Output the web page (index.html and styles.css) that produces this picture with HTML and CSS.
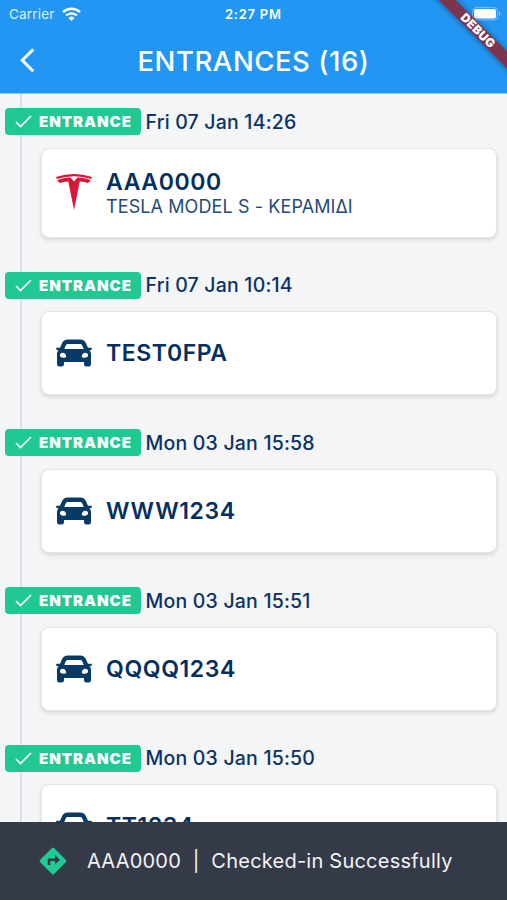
FILE: index.html
```html
<!DOCTYPE html>
<html lang="en">
<head>
<meta charset="utf-8">
<title>Entrances</title>
<link rel="stylesheet" href="styles.css">
</head>
<body>
<svg class="sprite" aria-hidden="true">
  <symbol id="check" viewBox="0 0 17 13"><path d="M1 7l4.500 4.500L16 1" fill="none" stroke="currentColor" stroke-width="1.700"/></symbol>
  <symbol id="car" viewBox="0 0 36 28"><path fill="currentColor" fill-rule="evenodd" d="M12 .5h12c3 0 5 1.300 6.100 4L32 8.700h3.200q.8 0 .7.800l-.3 1q-.2.800-1 .8h-1.400c1.200 1 1.800 2.400 1.800 4V25q0 2.500-2.300 2.500h-2.400q-2.300 0-2.300-2.500v-2H8v2q0 2.500-2.300 2.500H3.300Q1 27.500 1 25v-9.700c0-1.600.6-3 1.800-4H1.400q-.8 0-1-.8l-.3-1q-.1-.8.700-.8H4l1.900-4.200C7 1.800 9 .5 12 .5zM12.300 5c-1.500 0-2.100.4-2.700 1.700L8.300 10h19.400l-1.300-3.300C25.800 5.400 25.200 5 23.700 5zM6.900 13.700c-1.900 0-3 1-3 2.400 0 1.700 1.500 2.700 3.400 2.700 1.800 0 2.900-.4 2.900-1.500 0-1.400-1.500-3.600-3.300-3.600zm22.200 0c-1.800 0-3.300 2.200-3.300 3.600 0 1.100 1.100 1.500 2.900 1.500 1.900 0 3.400-1 3.400-2.700 0-1.400-1.100-2.400-3-2.400z"/></symbol>
</svg>
<div class="screen">
  <header class="appbar">
    <div class="status">
      <span class="carrier">Carrier</span>
      <svg class="wifi" viewBox="0 0 19 14"><g fill="none" stroke="#fff" stroke-width="2.400"><path d="M1 5.100a12.300 12.300 0 0 1 17 0"/><path d="M4.100 8.500a7.800 7.800 0 0 1 10.800 0"/></g><path fill="#fff" d="M6.500 10.900a4.400 4.400 0 0 1 6 0l-3 3z"/></svg>
      <span class="clock">2:27 PM</span>
      <svg class="battery" viewBox="0 0 29 14"><rect x=".6" y=".6" width="25" height="12.300" rx="3.500" fill="none" stroke="#fff" stroke-opacity=".4"/><rect x="2" y="2" width="22" height="9.500" rx="2" fill="#fff"/><path d="M27 4.500q3 2.200 0 4.400z" fill="#fff" fill-opacity=".45"/></svg>
    </div>
    <div class="titlebar">
      <svg class="back" viewBox="0 0 15 25"><path d="M13.300 1.400L2.300 12.300l11 11" fill="none" stroke="#fff" stroke-width="3"/></svg>
      <h1>ENTRANCES (16)</h1>
    </div>
    <div class="debug"><span>DEBUG</span></div>
  </header>
  <main class="timeline">
    <section class="entry detailed">
      <div class="heading"><span class="badge"><svg><use href="#check"/></svg><b>ENTRANCE</b></span><time>Fri 07 Jan 14:26</time></div>
      <div class="card">
        <svg class="tesla" viewBox="0 0 36 36"><path fill="#dc1437" d="M0 3Q18-3 36 3l-.8 2Q18-.4.8 5zM1.300 6Q8 3.300 14.500 3.500L18 7.600l3.500-4.100Q28 3.300 34.700 6q-1 2.800-3.500 3.300-1-1.900-7.500-1.900L18 36 12.300 7.400q-6.500 0-7.500 1.900Q2.300 8.800 1.300 6z"/></svg>
        <div><div class="plate">AAA0000</div><div class="model">TESLA MODEL S - ΚΕΡΑΜΙΔΙ</div></div>
      </div>
    </section>
    <section class="entry">
      <div class="heading"><span class="badge"><svg><use href="#check"/></svg><b>ENTRANCE</b></span><time>Fri 07 Jan 10:14</time></div>
      <div class="card"><svg class="car"><use href="#car"/></svg><div class="plate">TEST0FPA</div></div>
    </section>
    <section class="entry">
      <div class="heading"><span class="badge"><svg><use href="#check"/></svg><b>ENTRANCE</b></span><time>Mon 03 Jan 15:58</time></div>
      <div class="card"><svg class="car"><use href="#car"/></svg><div class="plate">WWW1234</div></div>
    </section>
    <section class="entry">
      <div class="heading"><span class="badge"><svg><use href="#check"/></svg><b>ENTRANCE</b></span><time>Mon 03 Jan 15:51</time></div>
      <div class="card"><svg class="car"><use href="#car"/></svg><div class="plate">QQQQ1234</div></div>
    </section>
    <section class="entry">
      <div class="heading"><span class="badge"><svg><use href="#check"/></svg><b>ENTRANCE</b></span><time>Mon 03 Jan 15:50</time></div>
      <div class="card"><svg class="car"><use href="#car"/></svg><div class="plate">TT1234</div></div>
    </section>
  </main>
  <footer class="snackbar">
    <svg viewBox="0 0 28 28"><path fill="#20ca94" d="M12.900 1q1.100-1 2.200 0L27 12.900q1 1.100 0 2.200L15.100 27q-1.100 1-2.200 0L1 15.100q-1-1.100 0-2.200z"/><path fill="#353a48" d="M8.700 18v-5.300q0-1.300 1.300-1.300h6V8l5 4.800-5 4.800v-3.500h-4.600V18z"/></svg>
    <span>AAA0000&nbsp; |&nbsp; Checked-in Successfully</span>
  </footer>
</div>
</body>
</html>
```

FILE: styles.css
```css
* { box-sizing: border-box; }
body { margin: 0; font-family: Inter, "Liberation Sans", sans-serif; color: #0a3365; }
.sprite { display: none; }
svg { display: block; flex: none; }
.screen { width: 507px; height: 900px; display: flex; flex-direction: column; overflow: hidden; background: #f3f5f7; }
.appbar { position: relative; flex: none; height: 94px; overflow: hidden; background: #2196f3; border-bottom: 1px solid #8cc8f6; color: #fff; }
.status { display: grid; grid-template-columns: 53px 163px 1fr 29px; align-items: center; height: 28px; padding: 0 6px 0 9px; }
.carrier { font-size: 13.500px; letter-spacing: .2px; opacity: .85; }
.wifi { width: 19px; height: 14px; }
.clock { font-size: 13px; font-weight: 600; letter-spacing: .75px; white-space: nowrap; }
.battery { width: 29px; height: 14px; }
.titlebar { display: grid; grid-template-columns: 15px 1fr 15px; align-items: center; height: 64px; padding: 0 20px; }
.back { width: 15px; height: 25px; }
h1 { margin: 2px 0 0; text-align: center; font-size: 27.500px; line-height: 34px; font-weight: 500; letter-spacing: .55px; }
.debug { position: absolute; left: 417px; top: 24px; width: 120px; height: 12.300px; display: grid; place-items: center; transform: rotate(45deg); background: #7d354f; box-shadow: 0 0 6px rgba(0, 0, 0, .4); font-size: 12px; line-height: 12px; font-weight: 900; letter-spacing: .3px; }
.debug span { padding-left: 2px; }
.timeline { flex: 1; min-height: 0; overflow: hidden; padding: 14px 10px 0 4.500px; background: linear-gradient(#dde1e5, #dde1e5) 20px 0 / 2px 100% no-repeat; }
.entry { height: 157.700px; }
.detailed { height: 163.800px; }
.heading { display: flex; align-items: center; gap: 5px; height: 27px; }
.badge { display: flex; align-items: center; gap: 7px; width: 136px; height: 27px; padding-left: 10.500px; border-radius: 4px; background: #20c993; color: #fff; }
.badge svg { width: 17px; height: 13px; }
.badge b { font-size: 15px; font-weight: 900; letter-spacing: 1px; }
time { font-size: 19.500px; font-weight: 500; letter-spacing: .2px; }
.card { display: flex; align-items: center; gap: 14px; height: 84px; margin: 12.500px 0 0 36.500px; padding-left: 14px; border: 1px solid #e3e6e9; border-radius: 8px; background: #fff; box-shadow: 0 2px 4px rgba(0, 0, 0, .13); }
.detailed .card { height: 90px; }
.car { width: 36px; height: 28px; color: #073b66; }
.tesla { width: 36px; height: 36px; margin-top: -2px; }
.plate { font-size: 23px; line-height: 28px; font-weight: 600; letter-spacing: .6px; color: #052f61; }
.model { font-size: 18px; line-height: 22px; letter-spacing: .1px; color: #244b78; }
.snackbar { flex: none; height: 78px; display: flex; align-items: center; gap: 20.500px; padding-left: 38.500px; background: #353a48; color: #f2f3f5; font-size: 20px; letter-spacing: .23px; }
.snackbar svg { width: 28px; height: 28px; }
```
